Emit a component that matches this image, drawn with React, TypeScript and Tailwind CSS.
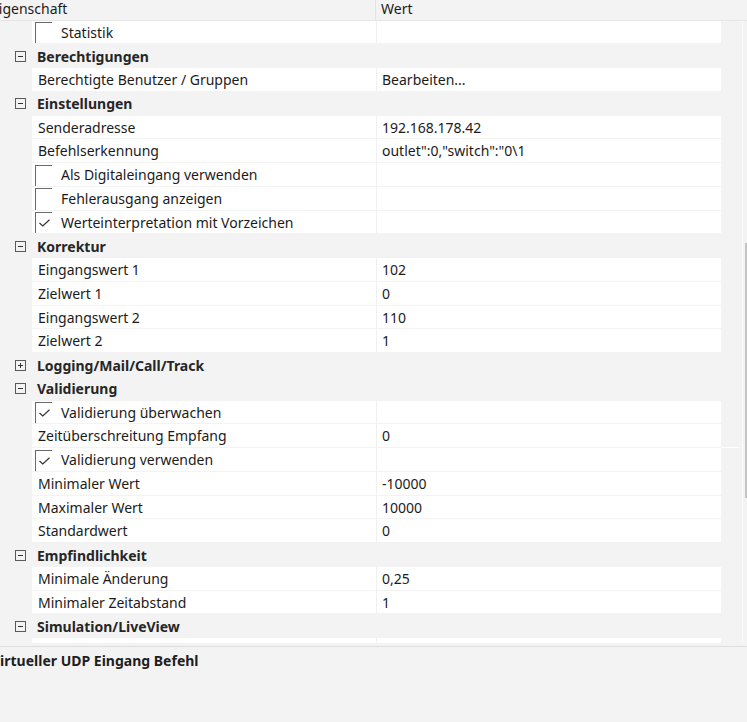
import React from 'react'

type Row =
  | { kind: 'cat'; label: string; open?: boolean }
  | { kind: 'prop'; label: string; value?: string }
  | { kind: 'check'; label: string; checked: boolean }

const rows: Row[] = [
  { kind: 'check', label: 'Statistik', checked: false },
  { kind: 'cat', label: 'Berechtigungen', open: true },
  { kind: 'prop', label: 'Berechtigte Benutzer / Gruppen', value: 'Bearbeiten...' },
  { kind: 'cat', label: 'Einstellungen', open: true },
  { kind: 'prop', label: 'Senderadresse', value: '192.168.178.42' },
  { kind: 'prop', label: 'Befehlserkennung', value: 'outlet":0,"switch":"0\\1' },
  { kind: 'check', label: 'Als Digitaleingang verwenden', checked: false },
  { kind: 'check', label: 'Fehlerausgang anzeigen', checked: false },
  { kind: 'check', label: 'Werteinterpretation mit Vorzeichen', checked: true },
  { kind: 'cat', label: 'Korrektur', open: true },
  { kind: 'prop', label: 'Eingangswert 1', value: '102' },
  { kind: 'prop', label: 'Zielwert 1', value: '0' },
  { kind: 'prop', label: 'Eingangswert 2', value: '110' },
  { kind: 'prop', label: 'Zielwert 2', value: '1' },
  { kind: 'cat', label: 'Logging/Mail/Call/Track', open: false },
  { kind: 'cat', label: 'Validierung', open: true },
  { kind: 'check', label: 'Validierung überwachen', checked: true },
  { kind: 'prop', label: 'Zeitüberschreitung Empfang', value: '0' },
  { kind: 'check', label: 'Validierung verwenden', checked: true },
  { kind: 'prop', label: 'Minimaler Wert', value: '-10000' },
  { kind: 'prop', label: 'Maximaler Wert', value: '10000' },
  { kind: 'prop', label: 'Standardwert', value: '0' },
  { kind: 'cat', label: 'Empfindlichkeit', open: true },
  { kind: 'prop', label: 'Minimale Änderung', value: '0,25' },
  { kind: 'prop', label: 'Minimaler Zeitabstand', value: '1' },
  { kind: 'cat', label: 'Simulation/LiveView', open: true },
  { kind: 'prop', label: '', value: '' },
]

function ExpandBox({ open }: { open?: boolean }) {
  return (
    <svg width="11" height="11" viewBox="0 0 11 11" className="ml-[15px] shrink-0">
      <rect x="0.5" y="0.5" width="10" height="10" fill="none" stroke="#5a5a5a" />
      <line x1="3" y1="5.5" x2="8" y2="5.5" stroke="#333" />
      {!open && <line x1="5.5" y1="3" x2="5.5" y2="8" stroke="#333" />}
    </svg>
  )
}

function CheckBox({ checked }: { checked: boolean }) {
  // only the top and left edges of the box show inside the row
  return (
    <div className="ml-[3px] mt-[1.5px] w-[17px] self-stretch border-l border-t border-[#6a6a6a] shrink-0">
      {checked && (
        <svg width="11" height="8" viewBox="0 0 11 8" className="ml-[3px] mt-[6px]">
          <polyline points="0.5,4 3.8,7 10.5,0.8" fill="none" stroke="#333" strokeWidth="1.2" />
        </svg>
      )}
    </div>
  )
}

function GridRow({ row }: { row: Row }) {
  if (row.kind === 'cat') {
    return (
      <div className="flex h-[23.75px] items-center shrink-0">
        <ExpandBox open={row.open} />
        <span className="ml-[11px] font-bold text-[#262626]">{row.label}</span>
      </div>
    )
  }
  return (
    <div className="flex h-[23.75px] pb-px pl-[32px] shrink-0">
      <div className="flex flex-1 bg-white">
        <div className="flex w-[344px] items-stretch">
          {row.kind === 'check' ? (
            <>
              <CheckBox checked={row.checked} />
              <span className="ml-[9px] self-center">{row.label}</span>
            </>
          ) : (
            <span className="ml-[6px] self-center">{row.label}</span>
          )}
        </div>
        <div className="w-px bg-[#f0f0f0]" />
        <div className="flex flex-1 items-center pl-[5px]">
          {row.kind === 'prop' ? row.value : ''}
        </div>
      </div>
    </div>
  )
}

export default function App() {
  return (
    <div
      className="flex h-[722px] w-[747px] flex-col overflow-hidden bg-[#f3f3f3] text-[14px] text-[#1b1b1b]"
      style={{ fontFamily: '"Noto Sans", "Open Sans", sans-serif' }}
    >
      {/* Kopfzeile */}
      <div className="flex h-[20.7px] shrink-0 border-b border-[#e6e6e6] leading-[17px]">
        <div className="w-[376px] overflow-hidden border-r border-[#e3e3e3]">
          <span className="ml-[-9px]">Eigenschaft</span>
        </div>
        <div className="pl-[5px]">Wert</div>
      </div>

      <div className="flex h-[622.3px] shrink-0">
        <div className="flex w-[721px] flex-col overflow-hidden">
          {rows.map((r, i) => (
            <GridRow key={i} row={r} />
          ))}
        </div>
        {/* Scrollleiste */}
        <div className="flex w-[26px] justify-end">
          <div className="flex flex-1 flex-col">
            <div className="h-[426px]" />
            <div className="mr-[3px] h-px bg-white" />
          </div>
          <div className="mr-[2px] h-[621px] w-px bg-[#fafafa]" />
          <div className="flex w-[2px] flex-col">
            <div className="h-[222px]" />
            <div className="h-[255px] bg-[#c4c4c4]" />
          </div>
        </div>
      </div>

      <div className="h-[3.5px] shrink-0" />
      <div className="shrink-0 border-t border-[#dedede] pt-[4px] leading-[19px]">
        <span className="ml-[-9px] font-bold text-[#1e1e1e]">Virtueller UDP Eingang Befehl</span>
      </div>
    </div>
  )
}
